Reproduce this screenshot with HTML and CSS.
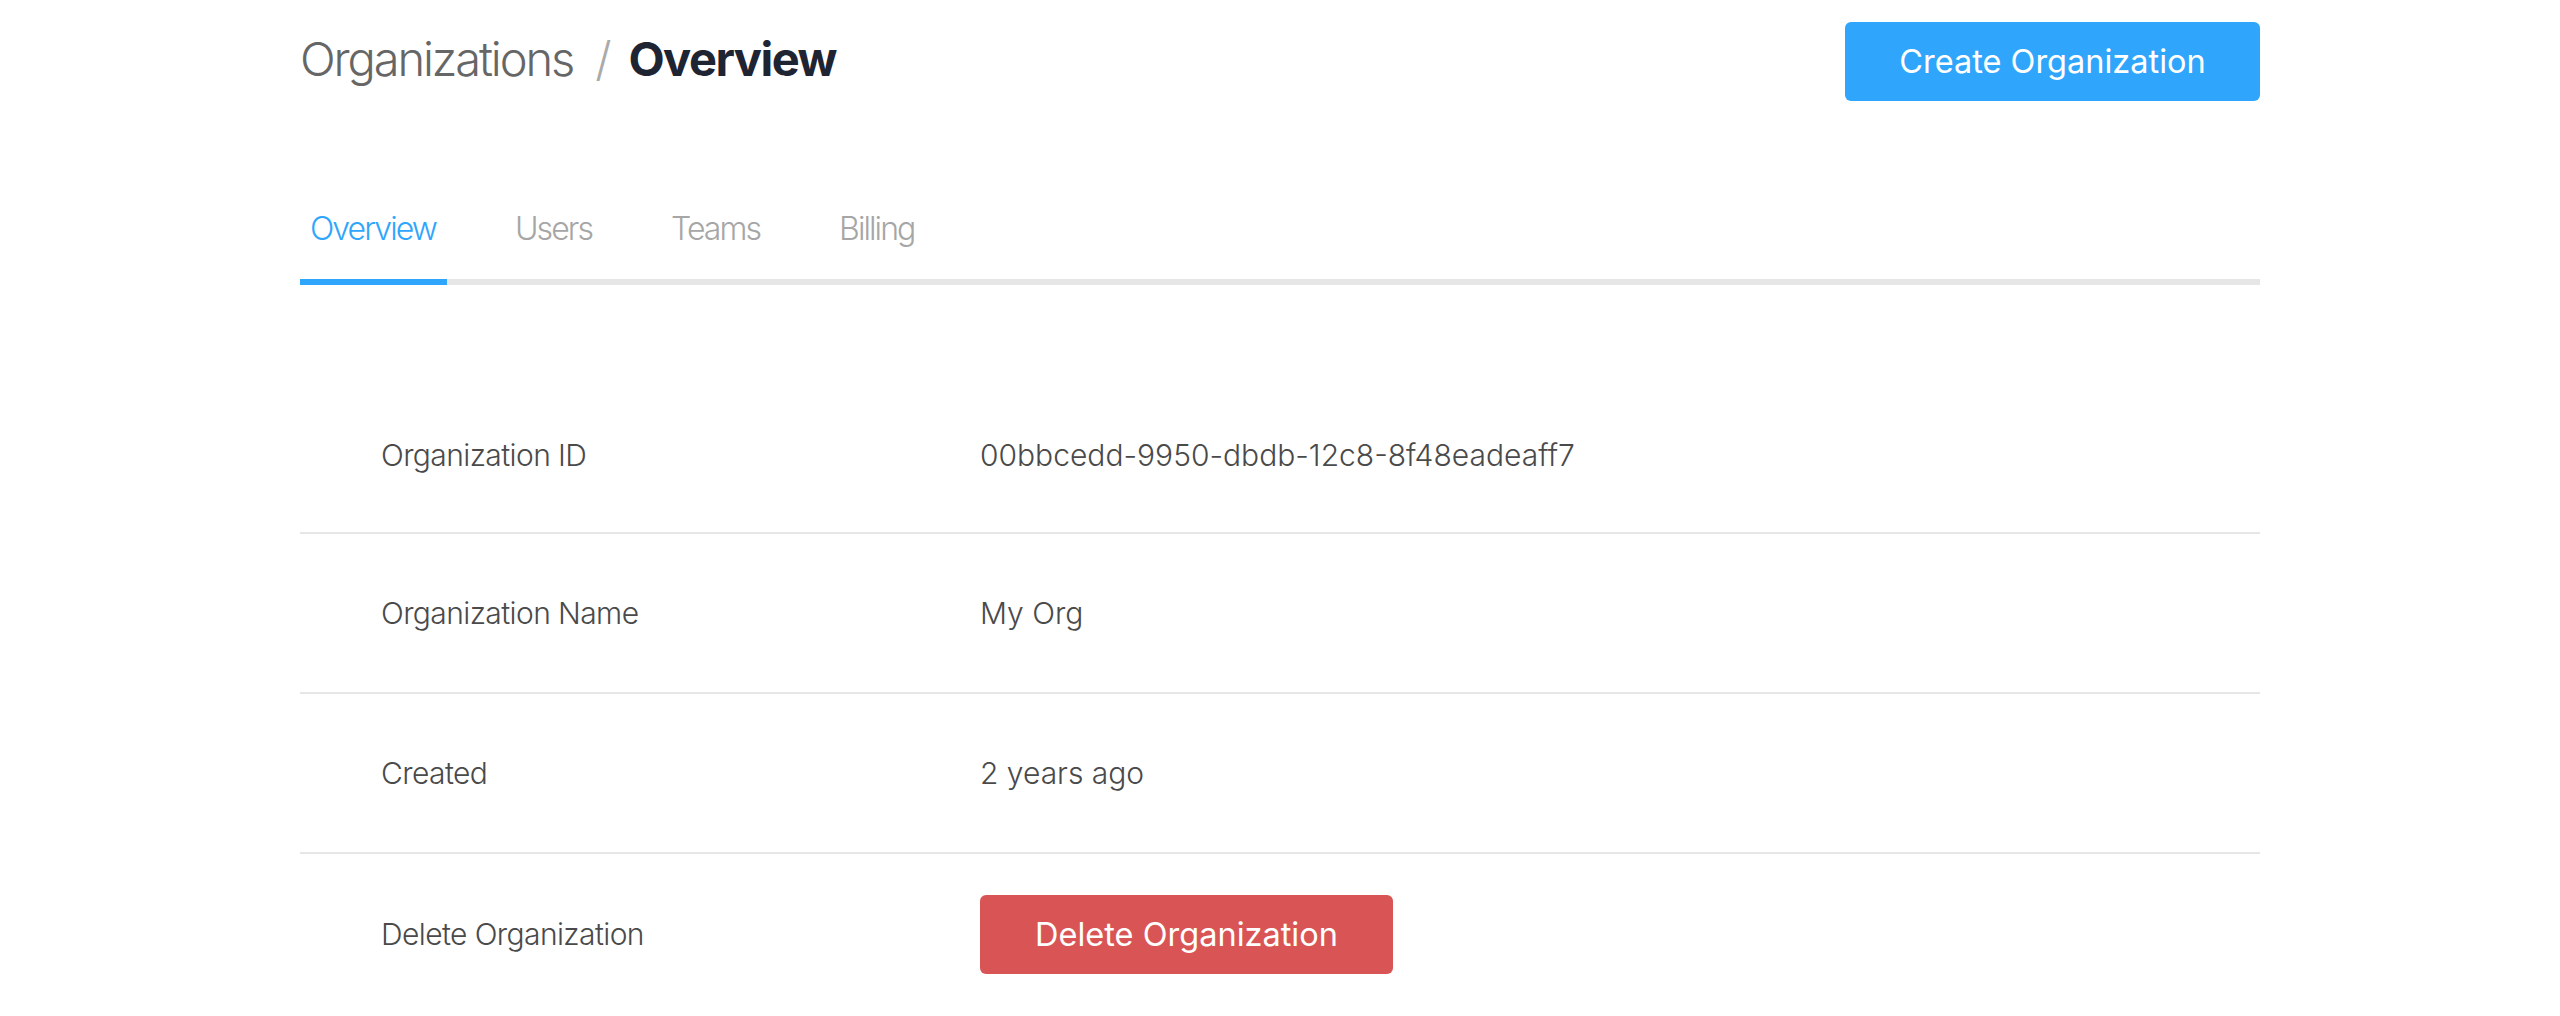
FILE: index.html
```html
<!DOCTYPE html>
<html>
<head>
<meta charset="utf-8">
<title>Organizations / Overview</title>
<link rel="stylesheet" href="styles.css">
</head>
<body>
<div class="page">
  <header class="header">
    <h1 class="title">
      <span class="crumb">Organizations</span>
      <span class="sep">/</span>
      <span class="current">Overview</span>
    </h1>
    <button class="btn btn-primary">Create Organization</button>
  </header>

  <nav class="tabs">
    <a class="tab active">Overview</a>
    <a class="tab">Users</a>
    <a class="tab">Teams</a>
    <a class="tab">Billing</a>
  </nav>

  <section class="details">
    <div class="row">
      <div class="label">Organization ID</div>
      <div class="value">00bbcedd-9950-dbdb-12c8-8f48eadeaff7</div>
    </div>
    <div class="row">
      <div class="label">Organization Name</div>
      <div class="value">My Org</div>
    </div>
    <div class="row">
      <div class="label">Created</div>
      <div class="value">2 years ago</div>
    </div>
    <div class="row">
      <div class="label">Delete Organization</div>
      <div class="value"><button class="btn btn-danger">Delete Organization</button></div>
    </div>
  </section>
</div>
</body>
</html>
```

FILE: styles.css
```css
* { box-sizing: border-box; }

html, body {
  margin: 0;
  padding: 0;
  background: #ffffff;
}

body {
  font-family: Inter, "Noto Sans", "Liberation Sans", sans-serif;
  color: #4a4a4a;
}

.page {
  width: 1960px;
  margin: 0 auto;
}

.header {
  display: flex;
  justify-content: space-between;
  align-items: center;
  padding-top: 22px;
}

.title {
  margin: 0 0 6px;
  font-size: 47px;
  line-height: 60px;
  font-weight: 300;
  letter-spacing: -0.045em;
  display: flex;
  align-items: baseline;
}

.crumb { color: #666666; }

.sep {
  color: #aaaaaa;
  margin: 0 19px 0 22px;
}

.current {
  color: #1e2432;
  font-weight: 700;
  letter-spacing: -0.032em;
}

.btn {
  font-family: Inter, "Noto Sans", "Liberation Sans", sans-serif;
  font-size: 32.5px;
  font-weight: 400;
  color: #ffffff;
  border: 0;
  border-radius: 6px;
  height: 79px;
  width: 415px;
  padding: 0;
  cursor: pointer;
  letter-spacing: 0;
}

.btn-primary { background: #2fa6fc; }

.btn-danger {
  background: #d95555;
  width: 413px;
}

.tabs {
  display: flex;
  gap: 58px;
  margin-top: 108px;
  border-bottom: 6px solid #e6e6e6;
}

.tab {
  font-size: 32px;
  line-height: 40px;
  font-weight: 300;
  letter-spacing: -0.06em;
  color: #a6a6a6;
  padding: 0 11px 30px 10px;
  margin-bottom: -6px;
  border-bottom: 6px solid transparent;
}

.tab.active {
  color: #2fa6fc;
  border-bottom-color: #2fa6fc;
}

.details {
  margin-top: 92px;
}

.row {
  display: flex;
  align-items: center;
  height: 160px;
  border-bottom: 2px solid #e6e6e6;
  font-size: 30px;
  font-weight: 300;
  color: #4a4a4a;
}

.row:first-child {
  height: 157px;
}

.row:last-child { border-bottom: 0; }

.label {
  width: 680px;
  padding-left: 81px;
  letter-spacing: -0.02em;
}

.value {
  flex: 1;
  letter-spacing: 0;
}
```
